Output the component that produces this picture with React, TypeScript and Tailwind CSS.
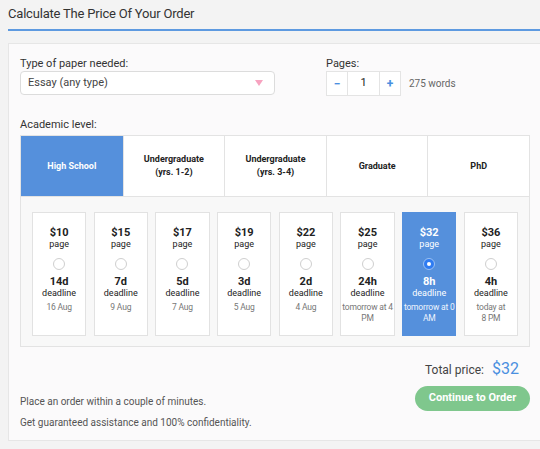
import React from "react";

const levels = [
  { label: ["High School"], active: true },
  { label: ["Undergraduate", "(yrs. 1-2)"] },
  { label: ["Undergraduate", "(yrs. 3-4)"] },
  { label: ["Graduate"] },
  { label: ["PhD"] },
];

const deadlines = [
  { price: "$10", term: "14d", date: ["16 Aug"] },
  { price: "$15", term: "7d", date: ["9 Aug"] },
  { price: "$17", term: "5d", date: ["7 Aug"] },
  { price: "$19", term: "3d", date: ["5 Aug"] },
  { price: "$22", term: "2d", date: ["4 Aug"] },
  { price: "$25", term: "24h", date: ["tomorrow at 4", "PM"] },
  { price: "$32", term: "8h", date: ["tomorrow at 0", "AM"], active: true },
  { price: "$36", term: "4h", date: ["today at", "8 PM"] },
];

const DeadlineCard: React.FC<{ d: (typeof deadlines)[number] }> = ({ d }) => {
  const on = !!d.active;
  return (
    <div
      className={
        (on ? "bg-[#5590dc] border-[#5590dc] text-white" : "bg-white border-[#e2e2e2] text-[#222]") +
        " h-[124px] border flex flex-col items-center pt-[14px] cursor-pointer"
      }
    >
      <div className="text-[11px] font-bold leading-[12px]">{d.price}</div>
      <div className="text-[9px] leading-[11px]">page</div>
      <div className="mt-[8px] h-3 w-3">
        {on ? (
          <div className="flex h-3 w-3 items-center justify-center rounded-full border border-[#9cc2f3] bg-[#2f7cf2]">
            <div className="h-[4px] w-[4px] rounded-full bg-white" />
          </div>
        ) : (
          <div className="h-3 w-3 rounded-full border border-[#cfcfcf] bg-white" />
        )}
      </div>
      <div className="mt-[6px] text-[11px] font-bold leading-[12px]">{d.term}</div>
      <div className="text-[9px] leading-[11px]">deadline</div>
      <div
        className={
          (on ? "text-[#eef4fc]" : "text-[#777]") +
          " mt-[3px] text-center text-[8.5px] leading-[11px] tracking-[-0.2px]"
        }
      >
        {d.date.map((l) => (
          <div key={l}>{l}</div>
        ))}
      </div>
    </div>
  );
};

export default function App() {
  return (
    <div className="w-[540px] min-h-[449px] overflow-hidden bg-[#f3f3f3] font-['Roboto',sans-serif] text-[#333]">
      <div className="pl-2">
        <h2 className="border-b-2 border-[#5d9ae0] pt-[5px] pb-[6px] text-[13px] leading-[18px] tracking-[-0.2px] text-[#333]">
          Calculate The Price Of Your Order
        </h2>
      </div>

      <div className="ml-2 mt-[12px] w-[534px] border border-[#e6e6e6] bg-[#fbfafb] px-[11px] pt-[12px] pb-[7px]">
        <div className="flex">
          <div className="w-[306px]">
            <div className="text-[11px] leading-[15px]">Type of paper needed:</div>
            <div className="flex h-[24px] w-[255px] items-center justify-between rounded-[4px] border border-[#dcdcdc] bg-white pr-[11px] pl-[7px]">
              <span className="text-[11px] text-[#444]">Essay (any type)</span>
              <svg width="8" height="6" viewBox="0 0 8 6">
                <polygon points="0,0 8,0 4,6" fill="#f7a3c0" />
              </svg>
            </div>
          </div>
          <div>
            <div className="text-[11px] leading-[15px]">Pages:</div>
            <div className="flex items-center">
              <div className="flex h-[25px] border border-[#e4e4e4] bg-white">
                <button className="w-[21px] border-r border-[#e4e4e4] text-[12px] font-bold leading-none text-[#4a8fe0]">
                  −
                </button>
                <div className="flex w-[32px] items-center justify-center border-r border-[#e4e4e4] text-[11px] text-[#222]">
                  1
                </div>
                <button className="w-[20px] text-[12px] font-bold leading-none text-[#4a8fe0]">+</button>
              </div>
              <span className="ml-[8px] text-[10px] text-[#666]">275 words</span>
            </div>
          </div>
        </div>

        <div className="mt-[22px] text-[11px] leading-[14px]">Academic level:</div>
        <div className="mt-[3px] grid h-[62px] w-[510px] grid-cols-5 border border-[#e3e3e3] bg-white">
          {levels.map((l, i) => (
            <div
              key={i}
              className={
                (l.active ? "bg-[#5590dc] text-white" : "text-[#222]") +
                (i > 0 ? " border-l border-[#e3e3e3]" : "") +
                " flex flex-col items-center justify-center text-center text-[9px] font-bold leading-[13px]"
              }
            >
              {l.label.map((t) => (
                <div key={t}>{t}</div>
              ))}
            </div>
          ))}
        </div>
        <div className="w-[510px] border-x border-b border-[#e3e3e3] bg-[#f8f8f8] px-[11px] pt-[15px] pb-[10px]">
          <div className="grid grid-cols-8 gap-[7.5px]">
            {deadlines.map((d) => (
              <DeadlineCard key={d.price} d={d} />
            ))}
          </div>
        </div>

        <div className="mt-[10px] flex justify-between">
          <div className="mt-[34px] text-[10px] leading-[21px] text-[#555]">
            <div>Place an order within a couple of minutes.</div>
            <div>Get guaranteed assistance and 100% confidentiality.</div>
          </div>
          <div className="flex flex-col items-end">
            <div className="mr-[11px] flex h-[20px] items-baseline gap-[8px]">
              <span className="text-[12px] text-[#444]">Total price:</span>
              <span className="text-[16px] text-[#4a8fe0]">$32</span>
            </div>
            <button className="mt-[9px] h-[25px] w-[115px] rounded-full bg-[#7fc78d] text-[11px] font-bold text-white">
              Continue to Order
            </button>
          </div>
        </div>
      </div>
    </div>
  );
}
